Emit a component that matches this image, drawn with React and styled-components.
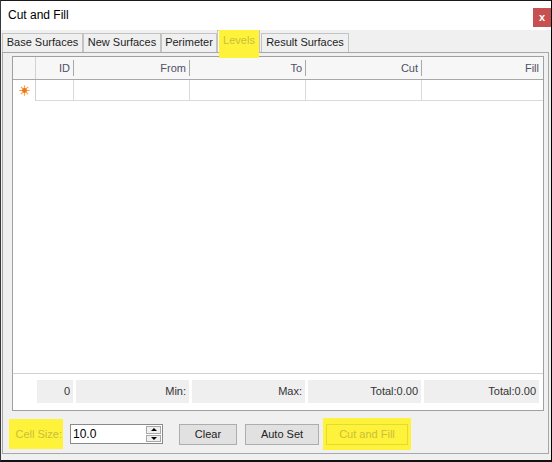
import styled, { createGlobalStyle } from 'styled-components';

const GlobalStyle = createGlobalStyle`
  body {
    margin: 0;
    background: #fff;
    font-family: "Liberation Sans", Arial, sans-serif;
  }
`;

const HIGHLIGHT = '#fff23a';
const HIGHLIGHT_TEXT = '#c8c03c';

const Window = styled.div`
  width: 552px;
  height: 462px;
  box-sizing: border-box;
  border-top: 1px solid #1a1a1a;
  border-left: 1px solid #3a3a3a;
  border-right: 1px solid #000;
  border-bottom: 2px solid #111;
  background: #f0f0f0;
  display: flex;
  flex-direction: column;
`;

const TitleBar = styled.div`
  height: 29px;
  flex: none;
  background: #fff;
  display: flex;
  justify-content: space-between;
  align-items: flex-start;
  padding-left: 7px;
`;

const Title = styled.div`
  font-size: 12px;
  line-height: 15px;
  padding-top: 7px;
  color: #000;
`;

const CloseButton = styled.div`
  width: 18px;
  height: 19px;
  margin-top: 7px;
  background: #c75050;
  color: #fff;
  font: bold 11px "Liberation Sans", Arial, sans-serif;
  display: flex;
  align-items: center;
  justify-content: center;
  padding-bottom: 2px;
  box-sizing: border-box;
`;

const TabStrip = styled.div`
  height: 22px;
  flex: none;
  display: flex;
  align-items: flex-end;
  padding-left: 1px;
`;

const Tab = styled.div`
  position: relative;
  width: ${(p) => p.$w}px;
  height: ${(p) => (p.$active ? 22 : 19)}px;
  box-sizing: border-box;
  border: 1px solid #c3c3c3;
  border-bottom: none;
  margin-right: ${(p) => p.$gap || 0}px;
  background: ${(p) => (p.$active ? '#fff' : '#f0f0f0')};
  font-size: 11px;
  line-height: ${(p) => (p.$active ? 21 : 17)}px;
  color: #1e1e1e;
  text-align: center;
  white-space: nowrap;
`;

const TabHighlight = styled.div`
  position: absolute;
  left: 1px;
  right: 0;
  top: -1px;
  bottom: -6px;
  background: ${HIGHLIGHT};
  color: ${HIGHLIGHT_TEXT};
  font-size: 11px;
  line-height: 21px;
  text-align: center;
  z-index: 2;
`;

const Panel = styled.div`
  flex: none;
  height: 402px;
  box-sizing: border-box;
  margin: 0 2px 0 1px;
  border: 1px solid #a8a8a8;
  padding: 3px 4px 0 9px;
  display: flex;
  flex-direction: column;
`;

const Grid = styled.div`
  height: 355px;
  flex: none;
  box-sizing: border-box;
  border: 1px solid #a0a0a0;
  background: #fff;
  display: flex;
  flex-direction: column;
`;

const columns = '23px 38px 116px 116px 116px 1fr';

const HeaderRow = styled.div`
  display: grid;
  grid-template-columns: ${columns};
  height: 23px;
  box-sizing: border-box;
  border-bottom: 1px solid #a8a8a8;
  background: #f7f7f7;
`;

const HeaderCell = styled.div`
  position: relative;
  font-size: 11px;
  line-height: 22px;
  color: #4f4f66;
  text-align: right;
  padding-right: 4px;

  &::after {
    content: '';
    display: ${(p) => (p.$sep ? 'block' : 'none')};
    position: absolute;
    right: 0;
    top: 3px;
    bottom: 3px;
    width: 1px;
    background: #a8a8a8;
  }
`;

const Indicator = styled.div`
  border-right: 1px solid #d2d2d2;
  display: flex;
  align-items: center;
  justify-content: center;
`;

const DataRow = styled.div`
  display: grid;
  grid-template-columns: ${columns};
  height: 21px;
`;

const DataCell = styled.div`
  border-bottom: 1px solid #d9d9d9;
  border-right: ${(p) => (p.$last ? 'none' : '1px solid #d9d9d9')};
`;

const Filler = styled.div`
  flex: 1;
`;

const Footer = styled.div`
  height: 37px;
  box-sizing: border-box;
  border-top: 1px solid #d0d0d0;
  padding: 6px 0 0 24px;
  display: grid;
  grid-template-columns: 36px 113px 113px 113px 115px;
  grid-template-rows: 23px;
  column-gap: 3px;
`;

const FooterCell = styled.div`
  background: #efefef;
  font-size: 11px;
  line-height: 23px;
  color: #333;
  text-align: right;
  padding-right: 3px;
`;

const Controls = styled.div`
  flex: 1;
  display: flex;
  align-items: center;
  padding: 4px 0 0 0;
  margin-left: -3px;
`;

const LabelBox = styled.div`
  width: 54px;
  height: 30px;
  background: ${HIGHLIGHT};
  color: ${HIGHLIGHT_TEXT};
  font-size: 11px;
  display: flex;
  align-items: center;
  justify-content: flex-end;
  box-sizing: border-box;
  padding-right: 1px;
  margin-right: 7px;
`;

const NumberBox = styled.div`
  width: 93px;
  height: 20px;
  box-sizing: border-box;
  border: 1px solid #8a8a8a;
  background: #fff;
  display: flex;
  margin-right: 16px;
`;

const NumberText = styled.div`
  flex: 1;
  font-size: 12px;
  line-height: 18px;
  padding-left: 2px;
  color: #000;
`;

const Spin = styled.div`
  width: 15px;
  display: flex;
  flex-direction: column;
  padding: 1px 1px 1px 0;
  gap: 1px;
`;

const SpinButton = styled.div`
  flex: 1;
  border: 1px solid #a8a8a8;
  background: #f0f0f0;
  display: flex;
  align-items: center;
  justify-content: center;

  &::before {
    content: '';
    border-left: 3px solid transparent;
    border-right: 3px solid transparent;
    ${(p) => (p.$up ? 'border-bottom: 3px solid #000;' : 'border-top: 3px solid #000;')}
  }
`;

const Button = styled.div`
  width: ${(p) => p.$w}px;
  height: 21px;
  box-sizing: border-box;
  border: 1px solid ${(p) => (p.$ghost ? '#e2da35' : '#adadad')};
  background: ${(p) => (p.$ghost ? 'transparent' : '#e1e1e1')};
  color: ${(p) => (p.$ghost ? HIGHLIGHT_TEXT : '#222')};
  font-size: 11px;
  line-height: 19px;
  text-align: center;
  margin-right: ${(p) => p.$gap || 0}px;
`;

const ButtonHighlight = styled.div`
  background: ${HIGHLIGHT};
  padding: 6px 3px 5px;
`;

const NewRowStar = () => (
  <svg width="11" height="11" viewBox="0 0 11 11">
    <g stroke="#f7a34a" strokeWidth="1.2" strokeLinecap="round">
      <line x1="5.5" y1="0.8" x2="5.5" y2="10.2" />
      <line x1="0.8" y1="5.5" x2="10.2" y2="5.5" />
      <line x1="2.2" y1="2.2" x2="8.8" y2="8.8" />
      <line x1="8.8" y1="2.2" x2="2.2" y2="8.8" />
    </g>
    <circle cx="5.5" cy="5.5" r="2.4" fill="#f0741a" />
  </svg>
);

const tabs = [
  { label: 'Base Surfaces', w: 81 },
  { label: 'New Surfaces', w: 78 },
  { label: 'Perimeter', w: 56 },
  { label: 'Levels', w: 43, active: true },
  { label: 'Result Surfaces', w: 88 },
];

const headers = ['ID', 'From', 'To', 'Cut', 'Fill'];
const totals = ['0', 'Min:', 'Max:', 'Total:0.00', 'Total:0.00'];

export default function App() {
  return (
    <>
      <GlobalStyle />
      <Window>
        <TitleBar>
          <Title>Cut and Fill</Title>
          <CloseButton>x</CloseButton>
        </TitleBar>
        <TabStrip>
          {tabs.map((t) => (
            <Tab key={t.label} $w={t.w} $active={t.active} $gap={t.active ? 1 : 0}>
              {t.active ? <TabHighlight>{t.label}</TabHighlight> : t.label}
            </Tab>
          ))}
        </TabStrip>
        <Panel>
          <Grid>
            <HeaderRow>
              <Indicator />
              {headers.map((h, i) => (
                <HeaderCell key={h} $sep={i < headers.length - 1}>
                  {h}
                </HeaderCell>
              ))}
            </HeaderRow>
            <DataRow>
              <Indicator>
                <NewRowStar />
              </Indicator>
              {headers.map((h, i) => (
                <DataCell key={h} $last={i === headers.length - 1} />
              ))}
            </DataRow>
            <Filler />
            <Footer>
              {totals.map((t, i) => (
                <FooterCell key={i}>{t}</FooterCell>
              ))}
            </Footer>
          </Grid>
          <Controls>
            <LabelBox>Cell Size:</LabelBox>
            <NumberBox>
              <NumberText>10.0</NumberText>
              <Spin>
                <SpinButton $up />
                <SpinButton />
              </Spin>
            </NumberBox>
            <Button $w={58} $gap={8}>Clear</Button>
            <Button $w={74} $gap={4}>Auto Set</Button>
            <ButtonHighlight>
              <Button $w={82} $ghost>Cut and Fill</Button>
            </ButtonHighlight>
          </Controls>
        </Panel>
      </Window>
    </>
  );
}
